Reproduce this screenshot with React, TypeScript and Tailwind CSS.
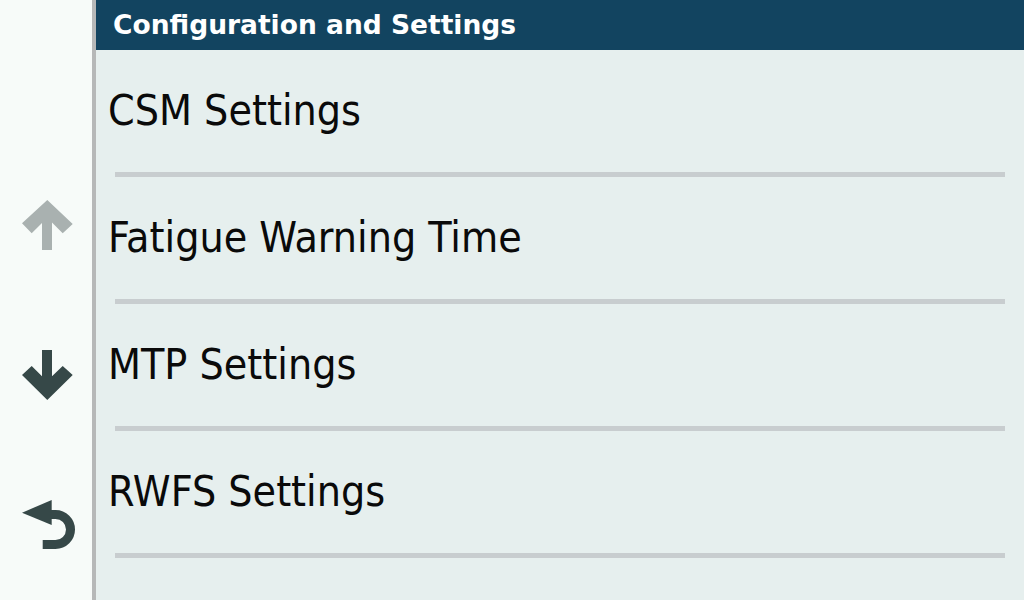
const ITEMS = ['CSM Settings', 'Fatigue Warning Time', 'MTP Settings', 'RWFS Settings']

const font = { fontFamily: '"DejaVu Sans", sans-serif' }
const condensed = { fontFamily: '"DejaVu Sans Condensed", "DejaVu Sans", sans-serif', fontStretch: 'condensed' }

function UpArrow() {
  return (
    <svg width="51" height="50" viewBox="0 0 51 50">
      <polygon
        fill="#a9b1b0"
        points="25.3,0 50.7,24 40.7,33.3 30,22.6 30,50 20,50 20,23 9.7,33.3 0,23.3"
      />
    </svg>
  )
}

function DownArrow() {
  return (
    <svg width="51" height="50" viewBox="0 0 51 50">
      <polygon
        fill="#364848"
        points="25.3,50 0,25 9.7,16 20,26.3 20,0 30,0 30,26.3 40.7,16 50.7,25"
      />
    </svg>
  )
}

function BackIcon() {
  return (
    <svg width="54" height="50" viewBox="0 0 54 50">
      <polygon fill="#364848" points="0,12.7 29.7,0 29.7,25" />
      <path d="M28 14.5 H33.5 A15 15 0 0 1 33.5 44.5 H20.7" fill="none" stroke="#364848" strokeWidth="9" />
    </svg>
  )
}

export default function App() {
  return (
    <div className="flex h-[600px] w-[1024px] overflow-hidden" style={font}>
      {/* left nav */}
      <aside className="flex w-[96px] shrink-0 flex-col gap-[100px] border-r-4 border-[#b6b8b8] bg-[#f7fbf9] pl-[22px] pt-[200px]">
        <UpArrow />
        <DownArrow />
        <BackIcon />
      </aside>

      <main className="flex flex-1 flex-col bg-[#e6efee]">
        <header className="flex h-[50px] items-center bg-[#124460] pl-[17px]">
          <h1 className="text-[26.5px] leading-none font-bold text-white">Configuration and Settings</h1>
        </header>

        <ul>
          {ITEMS.map((label) => (
            <li key={label} className="flex h-[127px] flex-col">
              <div className="flex h-[122px] items-center pl-[12px]">
                <span className="text-[42.5px] leading-none text-[#0a0a0a]" style={condensed}>
                  {label}
                </span>
              </div>
              <div className="ml-[19px] mr-[19px] h-[4.5px] bg-[#c8cdcf]" />
            </li>
          ))}
        </ul>
      </main>
    </div>
  )
}
